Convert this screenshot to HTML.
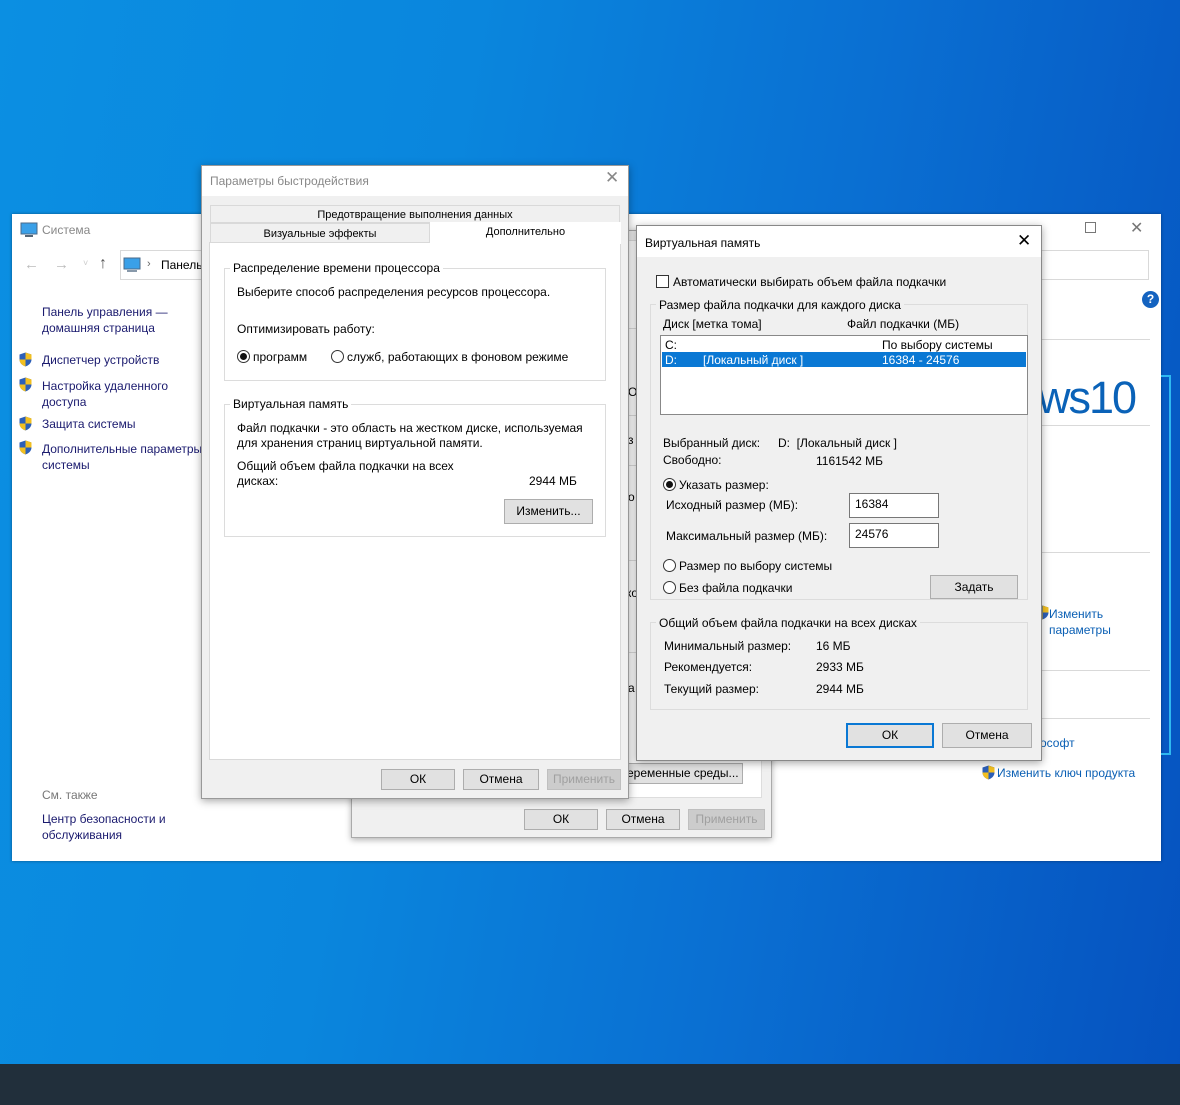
<!DOCTYPE html>
<html><head><meta charset="utf-8"><style>
*{margin:0;padding:0;box-sizing:border-box}
body{width:1180px;height:1105px;overflow:hidden;position:relative;font-family:"Liberation Sans",sans-serif;font-size:12px;color:#000;
background:linear-gradient(100deg,#0b8fe2 0%,#0a86dd 35%,#0a6fd2 65%,#0552bf 100%)}
.a{position:absolute;white-space:nowrap}
.btn{position:absolute;background:#e1e1e1;border:1px solid #adadad;text-align:center;font-size:12px}
.dis{color:#a0a0a0;background:#cccccc;border-color:#bfbfbf}
.grp{position:absolute;border:1px solid #dcdcdc}
.lg{position:absolute;background:#f0f0f0;padding:0 3px;white-space:nowrap}
.lnk{color:#1a1a6e}
.blue{color:#0a5fb4}
.rad{display:inline-block;width:13px;height:13px;border:1px solid #333;border-radius:50%;vertical-align:-2px;margin-right:3px;position:relative;background:#fff}
.rad.on::after{content:"";position:absolute;left:2px;top:2px;width:7px;height:7px;border-radius:50%;background:#111}
.sh{position:absolute;width:13px;height:15px}
</style></head><body>
<div class="a" style="left:0;top:1064px;width:1180px;height:41px;background:#212f3b"></div>

<!-- system window -->
<div class="a" style="left:12px;top:214px;width:1149px;height:647px;background:#fff;box-shadow:0 0 3px rgba(0,0,0,.4)"></div>
<svg class="a" style="left:20px;top:222px" width="18" height="16"><rect x="1" y="1" width="16" height="11" fill="#3aa0e8" stroke="#4a6a8a"/><rect x="5" y="13" width="8" height="2" fill="#567"/></svg>
<div class="a" style="left:42px;top:223px;color:#888;font-size:12px">Система</div>
<div class="a" style="left:1085px;top:222px;width:11px;height:11px;border:1px solid #777"></div>
<div class="a" style="left:1130px;top:218px;color:#777;font-size:16px">✕</div>
<div class="a" style="left:24px;top:256px;color:#bbb;font-size:15px">←</div>
<div class="a" style="left:54px;top:256px;color:#bbb;font-size:15px">→</div>
<div class="a" style="left:83px;top:258px;color:#ccc;font-size:9px">˅</div>
<div class="a" style="left:99px;top:255px;color:#555;font-size:16px">↑</div>
<div class="a" style="left:120px;top:250px;width:90px;height:30px;border:1px solid #d9d9d9"></div>
<svg class="a" style="left:123px;top:257px" width="18" height="16"><rect x="1" y="1" width="16" height="11" fill="#3aa0e8" stroke="#4a6a8a"/><rect x="4" y="13" width="10" height="2" fill="#89a"/></svg>
<div class="a" style="left:147px;top:258px;color:#666;font-size:11px">›</div>
<div class="a" style="left:161px;top:258px">Панель</div>
<div class="a" style="left:1040px;top:250px;width:109px;height:30px;border:1px solid #d9d9d9"></div>
<div class="a" style="left:1142px;top:291px;width:17px;height:17px;border-radius:50%;background:#1463c0;color:#fff;font-weight:bold;text-align:center;line-height:17px;font-size:12px">?</div>
<div class="a lnk" style="left:42px;top:304px;line-height:16px">Панель управления —<br>домашняя страница</div>
<svg width="0" height="0" style="position:absolute"><defs><symbol id="s" viewBox="0 0 13 15"><path d="M6.5 0.5L12.5 2.5V7.5C12.5 11 9.5 13.5 6.5 14.5C3.5 13.5 0.5 11 0.5 7.5V2.5Z" fill="#2c5fb8"/><path d="M6.5 0.5L12.5 2.5V7.5H6.5ZM6.5 7.5V14.5C3.5 13.5 0.5 11 0.5 7.5Z" fill="#f3c020"/></symbol></defs></svg>
<svg class="sh" style="left:19px;top:352px"><use href="#s"/></svg>
<svg class="sh" style="left:19px;top:377px"><use href="#s"/></svg>
<svg class="sh" style="left:19px;top:416px"><use href="#s"/></svg>
<svg class="sh" style="left:19px;top:440px"><use href="#s"/></svg>
<div class="a lnk" style="left:42px;top:353px">Диспетчер устройств</div>
<div class="a lnk" style="left:42px;top:378px;line-height:16px">Настройка удаленного<br>доступа</div>
<div class="a lnk" style="left:42px;top:417px">Защита системы</div>
<div class="a lnk" style="left:42px;top:441px;line-height:16px">Дополнительные параметры<br>системы</div>
<div class="a" style="left:42px;top:788px;color:#777">См. также</div>
<div class="a lnk" style="left:42px;top:811px;line-height:16px">Центр безопасности и<br>обслуживания</div>
<div class="a" style="left:1040px;top:339px;width:110px;height:1px;background:#d9d9d9"></div>
<div class="a" style="left:1040px;top:425px;width:110px;height:1px;background:#d9d9d9"></div>
<div class="a" style="left:1040px;top:552px;width:110px;height:1px;background:#d9d9d9"></div>
<div class="a" style="left:1040px;top:670px;width:110px;height:1px;background:#d9d9d9"></div>
<div class="a" style="left:1040px;top:718px;width:110px;height:1px;background:#d9d9d9"></div>
<div class="a" style="left:1038px;top:372px;color:#0a62b8;font-size:45px;letter-spacing:-2px">ws10</div>
<svg class="sh" style="left:1036px;top:605px"><use href="#s"/></svg>
<div class="a blue" style="left:1049px;top:606px;line-height:16px">Изменить<br>параметры</div>
<div class="a blue" style="left:1040px;top:736px">ософт</div>
<svg class="sh" style="left:982px;top:765px"><use href="#s"/></svg>
<div class="a blue" style="left:997px;top:766px">Изменить ключ продукта</div>
<div class="a" style="left:1161px;top:375px;width:10px;height:380px;border:2px solid #2fb8f0;border-left:none"></div>

<!-- back dialog -->
<div class="a" style="left:351px;top:230px;width:421px;height:608px;background:#f0f0f0;border:1px solid #aaa;box-shadow:0 2px 6px rgba(0,0,0,.3)"></div>
<div class="a" style="left:360px;top:240px;width:402px;height:558px;background:#fff;border:1px solid #ddd"></div>
<div class="a" style="left:628px;top:328px;width:10px;height:1px;background:#ddd"></div>
<div class="a" style="left:628px;top:415px;width:10px;height:1px;background:#ddd"></div>
<div class="a" style="left:628px;top:465px;width:10px;height:1px;background:#ddd"></div>
<div class="a" style="left:628px;top:560px;width:10px;height:1px;background:#ddd"></div>
<div class="a" style="left:628px;top:652px;width:10px;height:1px;background:#ddd"></div>
<div class="a" style="left:628px;top:385px">О</div>
<div class="a" style="left:628px;top:433px">з</div>
<div class="a" style="left:628px;top:490px">о</div>
<div class="a" style="left:626px;top:586px">ко</div>
<div class="a" style="left:628px;top:681px">а</div>
<div class="btn" style="left:624px;top:763px;width:119px;height:21px;line-height:19px;text-align:left;padding-left:2px">еременные среды...</div>
<div class="btn" style="left:524px;top:809px;width:74px;height:21px;line-height:19px">ОК</div>
<div class="btn" style="left:606px;top:809px;width:74px;height:21px;line-height:19px">Отмена</div>
<div class="btn dis" style="left:688px;top:809px;width:77px;height:21px;line-height:19px">Применить</div>

<!-- performance dialog -->
<div class="a" style="left:201px;top:165px;width:428px;height:634px;background:#f0f0f0;border:1px solid #999;box-shadow:0 2px 8px rgba(0,0,0,.35)"></div>
<div class="a" style="left:202px;top:166px;width:426px;height:30px;background:#fff"></div>
<div class="a" style="left:210px;top:174px;color:#888">Параметры быстродействия</div>
<div class="a" style="left:605px;top:168px;color:#888;font-size:17px">✕</div>
<div class="a" style="left:210px;top:205px;width:410px;height:18px;background:#f0f0f0;border:1px solid #d9d9d9;text-align:center;font-size:11px;line-height:18px">Предотвращение выполнения данных</div>
<div class="a" style="left:210px;top:223px;width:220px;height:20px;background:#f0f0f0;border:1px solid #d9d9d9;text-align:center;font-size:11px;line-height:20px">Визуальные эффекты</div>
<div class="a" style="left:209px;top:242px;width:412px;height:518px;background:#fff;border:1px solid #d9d9d9"></div>
<div class="a" style="left:430px;top:222px;width:191px;height:22px;background:#fff;text-align:center;font-size:11px;line-height:20px">Дополнительно</div>
<div class="grp" style="left:224px;top:268px;width:382px;height:113px"></div>
<div class="lg" style="left:230px;top:261px;background:#fff">Распределение времени процессора</div>
<div class="a" style="left:237px;top:285px">Выберите способ распределения ресурсов процессора.</div>
<div class="a" style="left:237px;top:322px">Оптимизировать работу:</div>
<div class="a" style="left:237px;top:350px"><span class="rad on"></span>программ</div>
<div class="a" style="left:331px;top:350px"><span class="rad"></span>служб, работающих в фоновом режиме</div>
<div class="grp" style="left:224px;top:404px;width:382px;height:133px"></div>
<div class="lg" style="left:230px;top:397px;background:#fff">Виртуальная память</div>
<div class="a" style="left:237px;top:421px;line-height:15px">Файл подкачки - это область на жестком диске, используемая<br>для хранения страниц виртуальной памяти.</div>
<div class="a" style="left:237px;top:459px;line-height:15px">Общий объем файла подкачки на всех<br>дисках:</div>
<div class="a" style="left:529px;top:474px">2944 МБ</div>
<div class="btn" style="left:504px;top:499px;width:89px;height:25px;line-height:23px">Изменить...</div>
<div class="btn" style="left:381px;top:769px;width:74px;height:21px;line-height:19px">ОК</div>
<div class="btn" style="left:463px;top:769px;width:76px;height:21px;line-height:19px">Отмена</div>
<div class="btn dis" style="left:547px;top:769px;width:74px;height:21px;line-height:19px">Применить</div>

<!-- virtual memory dialog -->
<div class="a" style="left:636px;top:225px;width:406px;height:536px;background:#f0f0f0;border:1px solid #888;box-shadow:0 2px 8px rgba(0,0,0,.35)"></div>
<div class="a" style="left:637px;top:226px;width:404px;height:31px;background:#fff"></div>
<div class="a" style="left:645px;top:236px">Виртуальная память</div>
<div class="a" style="left:1017px;top:231px;font-size:17px">✕</div>
<div class="a" style="left:656px;top:275px;width:13px;height:13px;border:1px solid #333;background:#fff"></div>
<div class="a" style="left:673px;top:275px">Автоматически выбирать объем файла подкачки</div>
<div class="grp" style="left:650px;top:304px;width:378px;height:296px"></div>
<div class="lg" style="left:656px;top:298px">Размер файла подкачки для каждого диска</div>
<div class="a" style="left:663px;top:317px">Диск [метка тома]</div>
<div class="a" style="left:847px;top:317px">Файл подкачки (МБ)</div>
<div class="a" style="left:660px;top:335px;width:368px;height:80px;background:#fff;border:1px solid #888"></div>
<div class="a" style="left:665px;top:338px">C:</div>
<div class="a" style="left:882px;top:338px">По выбору системы</div>
<div class="a" style="left:662px;top:352px;width:364px;height:15px;background:#0a78d4"></div>
<div class="a" style="left:665px;top:353px;color:#fff">D:</div>
<div class="a" style="left:703px;top:353px;color:#fff">[Локальный диск ]</div>
<div class="a" style="left:882px;top:353px;color:#fff">16384 - 24576</div>
<div class="a" style="left:663px;top:436px">Выбранный диск:</div>
<div class="a" style="left:778px;top:436px">D:&nbsp; [Локальный диск ]</div>
<div class="a" style="left:663px;top:453px">Свободно:</div>
<div class="a" style="left:816px;top:454px">1161542 МБ</div>
<div class="a" style="left:663px;top:478px"><span class="rad on"></span>Указать размер:</div>
<div class="a" style="left:666px;top:498px">Исходный размер (МБ):</div>
<div class="a" style="left:849px;top:493px;width:90px;height:25px;background:#fff;border:1px solid #777;padding:3px 5px">16384</div>
<div class="a" style="left:666px;top:529px">Максимальный размер (МБ):</div>
<div class="a" style="left:849px;top:523px;width:90px;height:25px;background:#fff;border:1px solid #777;padding:3px 5px">24576</div>
<div class="a" style="left:663px;top:559px"><span class="rad"></span>Размер по выбору системы</div>
<div class="a" style="left:663px;top:581px"><span class="rad"></span>Без файла подкачки</div>
<div class="btn" style="left:930px;top:575px;width:88px;height:24px;line-height:22px">Задать</div>
<div class="grp" style="left:650px;top:622px;width:378px;height:88px"></div>
<div class="lg" style="left:656px;top:616px">Общий объем файла подкачки на всех дисках</div>
<div class="a" style="left:664px;top:639px">Минимальный размер:</div>
<div class="a" style="left:816px;top:639px">16 МБ</div>
<div class="a" style="left:664px;top:660px">Рекомендуется:</div>
<div class="a" style="left:816px;top:660px">2933 МБ</div>
<div class="a" style="left:664px;top:682px">Текущий размер:</div>
<div class="a" style="left:816px;top:682px">2944 МБ</div>
<div class="btn" style="left:846px;top:723px;width:88px;height:25px;line-height:21px;border:2px solid #0a78d4">ОК</div>
<div class="btn" style="left:942px;top:723px;width:90px;height:25px;line-height:23px">Отмена</div>
</body></html>
